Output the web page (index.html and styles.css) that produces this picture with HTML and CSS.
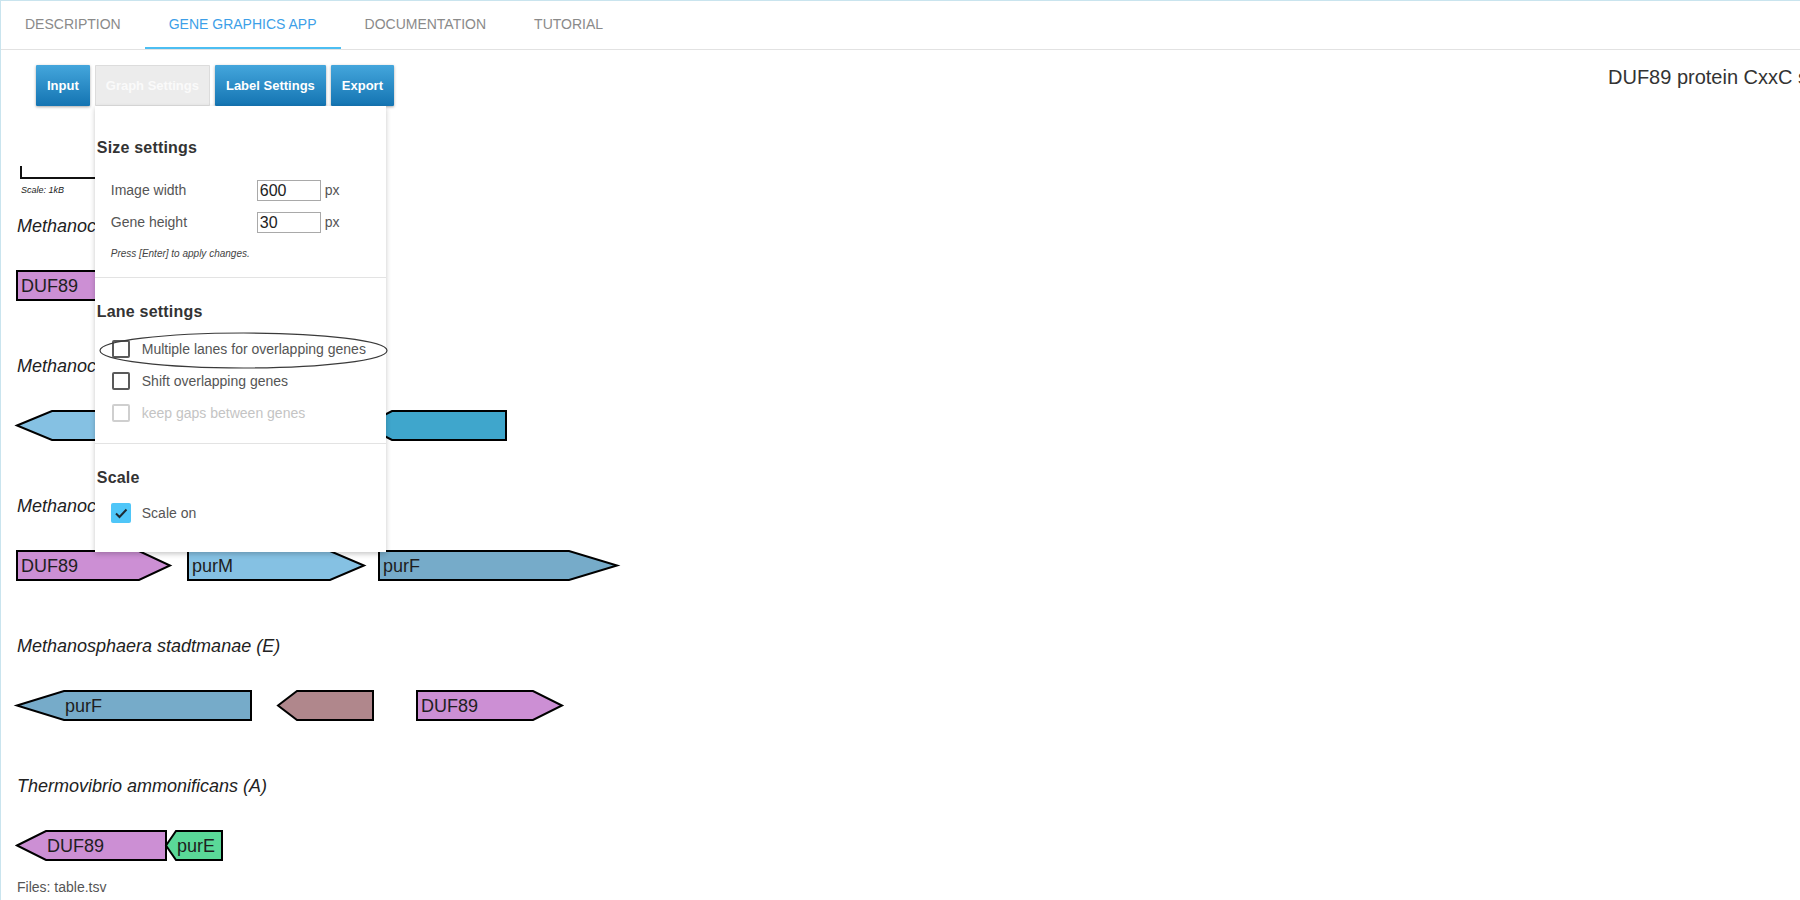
FILE: index.html
```html
<!DOCTYPE html>
<html>
<head>
<meta charset="utf-8">
<title>Gene Graphics</title>
<link rel="stylesheet" href="styles.css">
</head>
<body>
<div class="app">
  <nav class="tabs">
    <div class="tab">Description</div>
    <div class="tab active">Gene Graphics App</div>
    <div class="tab">Documentation</div>
    <div class="tab">Tutorial</div>
  </nav>
  <main class="content">
    <div class="toolbar">
      <div class="buttons">
        <button class="btn">Input</button>
        <div class="menu-wrap">
          <button class="btn btn-open">Graph Settings</button>
          <div class="dropdown">
            <h3 class="dd-head first">Size settings</h3>
            <div class="field">
              <span class="field-label">Image width</span>
              <span class="input">600</span>
              <span class="unit">px</span>
            </div>
            <div class="field second">
              <span class="field-label">Gene height</span>
              <span class="input">30</span>
              <span class="unit">px</span>
            </div>
            <p class="hint">Press [Enter] to apply changes.</p>
            <hr class="divider">
            <h3 class="dd-head">Lane settings</h3>
            <div class="check-row first-check"><span class="box"></span><span class="check-label">Multiple lanes for overlapping genes</span></div>
            <div class="check-row"><span class="box"></span><span class="check-label">Shift overlapping genes</span></div>
            <div class="check-row disabled"><span class="box"></span><span class="check-label">keep gaps between genes</span></div>
            <hr class="divider">
            <h3 class="dd-head">Scale</h3>
            <div class="check-row scale-check"><span class="box checked"><svg viewBox="0 0 20 20" width="20" height="20"><path d="M5 10.5 L8.5 14 L15.5 6.5" fill="none" stroke="#1d2b33" stroke-width="2"/></svg></span><span class="check-label">Scale on</span></div>
            <svg class="ellipse" width="300" height="40" viewBox="0 0 300 40"><ellipse cx="148.5" cy="18.5" rx="143.5" ry="17.5" fill="none" stroke="#3a3a3a" stroke-width="1.2"/></svg>
          </div>
        </div>
        <button class="btn">Label Settings</button>
        <button class="btn">Export</button>
      </div>
      <div class="title">DUF89 protein CxxC subfamily</div>
    </div>

    <section class="graphic">
      <div class="scale"></div>
      <div class="scale-label">Scale: 1kB</div>

      <div class="row">
        <div class="species">Methanocaldococcus jannaschii (A)</div>
        <svg class="genes" width="620" height="31" viewBox="0 0 620 31">
          <polygon points="0,1 112,1 140,15.5 112,30 0,30" fill="#cc8fd4"/>
          <text x="4" y="22">DUF89</text>
        </svg>
      </div>

      <div class="row">
        <div class="species">Methanococcus maripaludis (A)</div>
        <svg class="genes" width="620" height="31" viewBox="0 0 620 31">
          <polygon points="0,15.5 35,1 175,1 175,30 35,30" fill="#85c1e3"/>
          <polygon points="347,15.5 375,1 489,1 489,30 375,30" fill="#3fa6cc"/>
        </svg>
      </div>

      <div class="row">
        <div class="species">Methanococcus vannielii (A)</div>
        <svg class="genes" width="620" height="31" viewBox="0 0 620 31">
          <polygon points="0,1 122,1 153,15.5 122,30 0,30" fill="#cc8fd4"/>
          <text x="4" y="22">DUF89</text>
          <polygon points="171,1 313,1 347,15.5 313,30 171,30" fill="#85c1e3"/>
          <text x="175" y="22">purM</text>
          <polygon points="362,1 552,1 600,15.5 552,30 362,30" fill="#76abc9"/>
          <text x="366" y="22">purF</text>
        </svg>
      </div>

      <div class="row">
        <div class="species">Methanosphaera stadtmanae (E)</div>
        <svg class="genes" width="620" height="31" viewBox="0 0 620 31">
          <polygon points="0,15.5 47,1 234,1 234,30 47,30" fill="#76abc9"/>
          <text x="48" y="22">purF</text>
          <polygon points="261,15.5 280,1 356,1 356,30 280,30" fill="#b0878c"/>
          <polygon points="400,1 516,1 545,15.5 516,30 400,30" fill="#cc8fd4"/>
          <text x="404" y="22">DUF89</text>
        </svg>
      </div>

      <div class="row">
        <div class="species">Thermovibrio ammonificans (A)</div>
        <svg class="genes" width="620" height="31" viewBox="0 0 620 31">
          <polygon points="0,15.5 29,1 149,1 149,30 29,30" fill="#cc8fd4"/>
          <text x="30" y="22">DUF89</text>
          <polygon points="149,15.5 159,1 205,1 205,30 159,30" fill="#5ad898"/>
          <text x="160" y="22">purE</text>
        </svg>
      </div>
    </section>

    <div class="files">Files: table.tsv</div>
  </main>
</div>
</body>
</html>
```

FILE: styles.css
```css
html, body {
  margin: 0;
  padding: 0;
  overflow: hidden;
  background: #ffffff;
}

body {
  font-family: "Liberation Sans", Arial, sans-serif;
  color: #333;
}

.app {
  width: 1799px;
  height: 899px;
  border-top: 1px solid #c9e4ee;
  border-left: 1px solid #c9e4ee;
  overflow: hidden;
}

/* Tabs */
.tabs {
  display: flex;
  height: 48px;
  border-bottom: 1px solid #e2e2e2;
}

.tab {
  padding: 0 24px;
  line-height: 47px;
  font-size: 14px;
  text-transform: uppercase;
  color: #8a8a8a;
}

.tab.active {
  color: #3d9fe8;
  box-shadow: inset 0 -2px 0 #4cbef2;
}

/* Toolbar */
.content {
  padding: 0 0 0 16px;
}

.toolbar {
  display: flex;
  align-items: flex-start;
  padding-top: 15px;
}

.buttons {
  display: flex;
  gap: 5px;
  margin-left: 19px;
}

.btn {
  height: 41px;
  padding: 0 11px;
  border: 0;
  border-radius: 1px;
  font-family: "Liberation Sans", Arial, sans-serif;
  font-size: 13px;
  font-weight: bold;
  color: #ffffff;
  background: linear-gradient(#44a6dc, #1474b2);
  box-shadow: 0 1px 3px rgba(0, 0, 0, 0.35);
}

.btn-open {
  background: #ececec;
  box-shadow: 0 0 0 1px #dcdcdc inset;
  color: #fafafa;
}

.menu-wrap {
  position: relative;
  display: flex;
}

.title {
  margin-left: auto;
  width: 192px;
  font-size: 20px;
  line-height: 24px;
  color: #333;
  white-space: nowrap;
}

/* Dropdown */
.dropdown {
  position: absolute;
  top: 41px;
  left: 0;
  width: 291px;
  height: 446px;
  box-sizing: border-box;
  background: #fff;
  padding-top: 32px;
  box-shadow: 0 2px 5px rgba(0, 0, 0, 0.22);
  z-index: 5;
}

.dd-head {
  margin: 24px 0 0 2px;
  font-size: 16px;
  line-height: 20px;
  font-weight: bold;
  color: #333;
  letter-spacing: 0.2px;
}

.dd-head.first {
  margin-top: 0;
}

.field {
  display: flex;
  align-items: center;
  height: 22px;
  margin: 21px 0 0 16px;
  font-size: 14px;
  color: #555;
}

.field.second {
  margin-top: 10px;
}

.field-label {
  width: 146px;
}

.input {
  box-sizing: border-box;
  width: 64px;
  height: 21px;
  border: 1px solid #a9a9a9;
  padding: 1px 2px;
  font-size: 16px;
  line-height: 17px;
  color: #222;
}

.unit {
  margin-left: 4px;
}

.hint {
  margin: 15px 0 0 16px;
  font-size: 10px;
  line-height: 12px;
  font-style: italic;
  color: #444;
}

.divider {
  margin: 17px 0 0 0;
  border: 0;
  border-top: 1px solid #e3e3e3;
}

.dd-head + .first-check {
  margin-top: 18px;
}

.check-row {
  display: flex;
  align-items: center;
  height: 18px;
  margin: 14px 0 0 17px;
  font-size: 14px;
  color: #555;
}

.check-row + .divider {
  margin-top: 21px;
}

.box {
  box-sizing: border-box;
  width: 18px;
  height: 18px;
  border: 2px solid #5a5a5a;
  border-radius: 2px;
  margin-right: 12px;
}

.disabled {
  color: #c4c4c4;
}

.disabled .box {
  border-color: #cfcfcf;
}

.scale-check {
  margin-top: 15px;
  height: 20px;
}

.box.checked {
  width: 20px;
  height: 20px;
  border: 0;
  background: #4fc6f8;
  margin-left: -1px;
  margin-right: 11px;
}

.box.checked svg {
  display: block;
}

.ellipse {
  position: absolute;
  left: 0;
  top: 226px;
  overflow: visible;
}

/* Gene graphic */
.graphic {
  margin-top: 60px;
}

.scale {
  width: 130px;
  height: 11px;
  margin-left: 3px;
  border-left: 2px solid #111;
  border-bottom: 2px solid #111;
}

.scale-label {
  margin: 6px 0 0 4px;
  font-size: 9px;
  line-height: 10px;
  font-style: italic;
  color: #222;
}

.row {
  margin-top: 55px;
}

.scale-label + .row {
  margin-top: 21px;
}

.species {
  font-size: 18px;
  line-height: 20px;
  font-style: italic;
  color: #222;
}

.genes {
  display: block;
  margin-top: 34px;
  overflow: visible;
}

.genes polygon {
  stroke: #000;
  stroke-width: 2;
  stroke-linejoin: miter;
}

.genes text {
  font-family: "Liberation Sans", Arial, sans-serif;
  font-size: 18px;
  fill: #1e1e1e;
}

.files {
  margin-top: 18px;
  font-size: 14px;
  line-height: 16px;
  color: #555;
}
```
